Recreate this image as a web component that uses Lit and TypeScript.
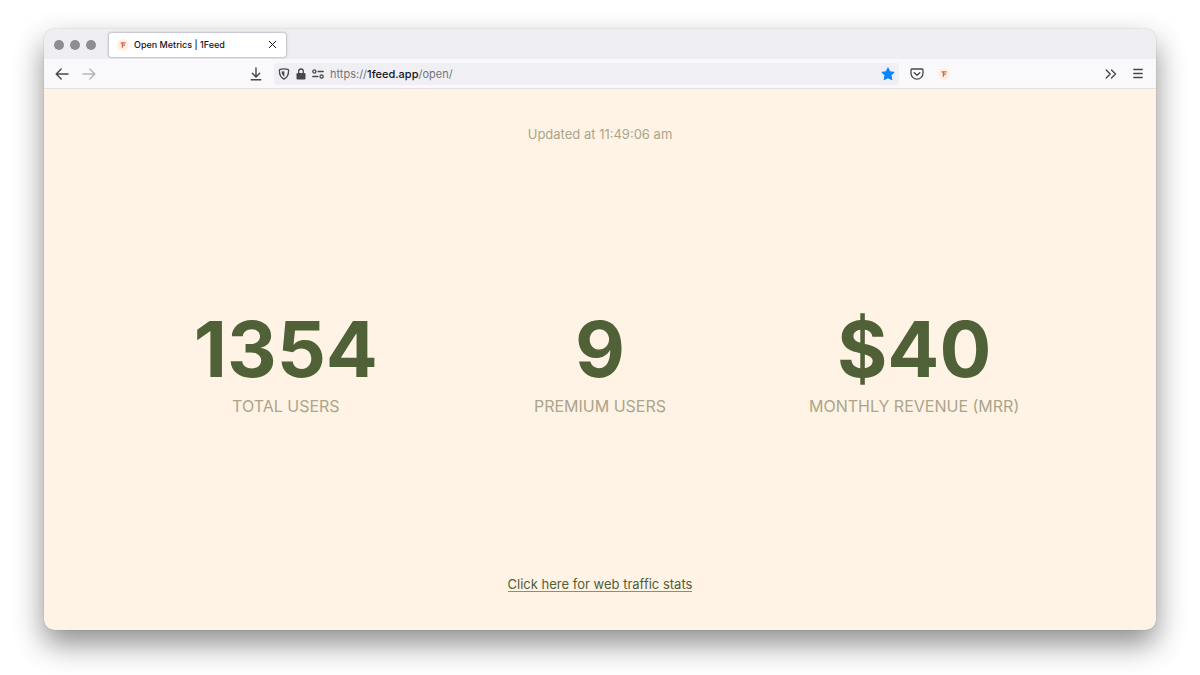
import { LitElement, html, css, svg } from "lit";
import { customElement, property, state } from "lit/decorators.js";

const stroke = (d: string, width = 1.4) =>
  svg`<path d=${d} fill="none" stroke="currentColor" stroke-width=${width} stroke-linecap="round" stroke-linejoin="round"></path>`;

const icons = {
  close: html`<svg width="9" height="9" viewBox="0 0 9 9" aria-hidden="true">${stroke("M1.2 1.2l6.6 6.6M7.8 1.2L1.2 7.8", 1)}</svg>`,
  back: html`<svg width="14" height="14" viewBox="0 0 14 14" aria-hidden="true">${stroke("M13 7H1.4M6.2 2L1.2 7l5 5")}</svg>`,
  forward: html`<svg width="14" height="14" viewBox="0 0 14 14" aria-hidden="true">${stroke("M1 7h11.6M7.8 2l5 5-5 5")}</svg>`,
  download: html`<svg width="12" height="14" viewBox="0 0 12 14" aria-hidden="true">${stroke("M6 1v8.600M2.300 6.200L6 9.900l3.700-3.700M1.200 12.700h9.600")}</svg>`,
  shield: html`<svg width="12" height="12" viewBox="0 0 12 12" aria-hidden="true">
    ${stroke("M2.200 1.400Q6 .500 9.800 1.400Q10.600 1.600 10.600 2.500C10.600 7 9.300 9.600 6 11.200C2.700 9.600 1.400 7 1.400 2.500Q1.400 1.600 2.200 1.400Z", 1.3)}
    <path d="M6.300 3.200v5.600C4.500 7.600 3.800 6.100 3.700 3.600Z" fill="currentColor"></path>
  </svg>`,
  lock: html`<svg width="10" height="12" viewBox="0 0 10 12" aria-hidden="true">
    ${stroke("M2.700 6V3.300a2.300 2.300 0 0 1 4.600 0V6", 1.3)}
    <rect x="0.500" y="5" width="9" height="6.500" rx="1.200" fill="currentColor"></rect>
  </svg>`,
  permissions: html`<svg width="12" height="10" viewBox="0 0 12 10" aria-hidden="true">
    <circle cx="2.400" cy="2.500" r="1.600" fill="none" stroke="currentColor" stroke-width="1.300"></circle>
    <circle cx="9.600" cy="7.500" r="1.600" fill="none" stroke="currentColor" stroke-width="1.300"></circle>
    ${stroke("M6.200 2.500h5M.8 7.500h5", 1.4)}
  </svg>`,
  star: html`<svg width="14" height="14" viewBox="0 0 14 14" aria-hidden="true">
    <path d="M7 .8l1.900 4 4.300.5-3.200 3 .9 4.500L7 10.700l-3.900 2.100.9-4.500-3.200-3 4.300-.5Z" fill="currentColor" stroke="currentColor" stroke-width="1" stroke-linejoin="round"></path>
  </svg>`,
  pocket: html`<svg width="14" height="12" viewBox="0 0 14 12" aria-hidden="true">
    ${stroke("M1.900 1h10.200c.5 0 .9.400.9.900V5.200a6 5.900 0 0 1-12 0V1.900c0-.5.400-.9.900-.9Z", 1.3)}
    ${stroke("M4.200 4.700L7 7.300l2.800-2.600", 1.4)}
  </svg>`,
  overflow: html`<svg width="12" height="10" viewBox="0 0 12 10" aria-hidden="true">${stroke("M1.200 1L5.200 5l-4 4M6.500 1l4 4-4 4", 1.4)}</svg>`,
  menu: html`<svg width="10" height="11" viewBox="0 0 10 11" aria-hidden="true">${stroke("M.8 1.500h8.400M.8 5.500h8.400M.8 9.500h8.400", 1.4)}</svg>`,
  feed: html`<svg width="12" height="12" viewBox="0 0 12 12" aria-hidden="true">
    <circle cx="6" cy="6" r="6" fill="#fff0e2"></circle>
    <path d="M3.600 3.800h5M5.400 3.800v4.900M5.400 6.100h2.600" fill="none" stroke="#d6605a" stroke-width="1.300"></path>
  </svg>`,
};

@customElement("metric-stat")
export class MetricStat extends LitElement {
  @property() value = "";
  @property() label = "";

  static styles = css`
    :host {
      display: flex;
      flex-direction: column-reverse;
      align-items: center;
      gap: 7px;
      text-align: center;
    }
    .value {
      margin: 0;
      font-size: 77px;
      line-height: 80px;
      font-weight: 700;
      color: #506037;
    }
    .label {
      margin: 0;
      font-size: 16px;
      line-height: 20px;
      font-weight: 400;
      text-transform: uppercase;
      white-space: nowrap;
      color: #aba58b;
    }
  `;

  render() {
    return html`
      <h2 class="label">${this.label}</h2>
      <p class="value">${this.value}</p>
    `;
  }
}

@customElement("app-root")
export class AppRoot extends LitElement {
  @state() private editing = false;

  private readonly metrics = [
    { value: "1354", label: "Total users" },
    { value: "9", label: "Premium users" },
    { value: "$40", label: "Monthly revenue (MRR)" },
  ];

  static styles = css`
    :host {
      display: flex;
      box-sizing: border-box;
      min-height: 100vh;
      padding: 29px 44px 45px;
      overflow: hidden;
      background: #ffffff;
      font-family: Inter, "Liberation Sans", sans-serif;
    }
    button {
      display: grid;
      place-items: center;
      padding: 0;
      border: 0;
      background: none;
      color: inherit;
    }
    svg {
      display: block;
    }
    .window {
      flex: 1;
      display: flex;
      flex-direction: column;
      min-width: 0;
      border-radius: 10px;
      background: #fff3e5;
      box-shadow: 0 0 1px rgba(0, 0, 0, 0.4), 0 14px 30px rgba(0, 0, 0, 0.45);
    }
    .tabs {
      display: flex;
      align-items: center;
      gap: 13px;
      height: 30px;
      padding: 1px 10px 0;
      box-sizing: border-box;
      border-radius: 10px 10px 0 0;
      background: #efeef3;
    }
    .lights {
      display: flex;
      gap: 6px;
    }
    .light {
      width: 10px;
      height: 10px;
      border-radius: 50%;
      background: #8e8e90;
    }
    .tab {
      display: flex;
      align-items: center;
      gap: 5px;
      box-sizing: border-box;
      width: 177px;
      height: 24px;
      padding: 0 9px 0 8px;
      border-radius: 3px;
      background: #ffffff;
      box-shadow: 0 0 2px 1px rgba(100, 100, 120, 0.35);
      font-size: 9px;
      line-height: 12px;
      font-weight: 500;
      color: #15141a;
    }
    .title {
      flex: 1;
      white-space: nowrap;
    }
    .toolbar {
      display: flex;
      align-items: center;
      height: 29px;
      padding: 0 13px 0 11px;
      border-bottom: 1px solid #e4e0df;
      background: #f9f9fb;
      color: #47464d;
    }
    .history {
      display: flex;
      gap: 13px;
      width: 195px;
    }
    .history button:disabled {
      color: #b5b5b9;
    }
    .address {
      flex: 1;
      display: flex;
      align-items: center;
      gap: 6px;
      min-width: 0;
      height: 22px;
      margin: 0 11px 0 12px;
      padding: 0 4px;
      border-radius: 3px;
      background: #f0f0f4;
    }
    .field {
      flex: 1;
      display: grid;
      align-items: center;
      min-width: 0;
      font-size: 11px;
      line-height: 16px;
    }
    .field > * {
      grid-area: 1 / 1;
    }
    .url {
      color: #75747a;
      white-space: nowrap;
    }
    .host {
      color: #15141a;
      font-weight: 500;
    }
    .input {
      width: 100%;
      box-sizing: border-box;
      padding: 0;
      border: 0;
      outline: 0;
      background: none;
      color: #15141a;
      font: inherit;
    }
    .star {
      color: #0a84ff;
    }
    .extensions {
      display: flex;
      align-items: center;
      gap: 14px;
      flex: none;
      width: 195px;
    }
    .tools {
      display: flex;
      align-items: center;
      gap: 16px;
    }
    .page {
      flex: 1;
      display: flex;
      flex-direction: column;
      align-items: center;
      padding: 35px 60px 38px;
      line-height: 20px;
    }
    .updated {
      margin: 0;
      font-size: 13px;
      color: #aba58b;
    }
    .stats {
      flex: 1;
      display: grid;
      grid-template-columns: repeat(3, 1fr);
      align-items: center;
      width: 95%;
      padding-top: 3px;
    }
    .traffic {
      font-size: 13px;
      line-height: 14px;
      color: #506037;
      text-decoration: none;
      border-bottom: 1px solid #8c9073;
    }
  `;

  private edit(event: Event) {
    this.editing = true;
    (event.target as HTMLInputElement).value = "https://1feed.app/open/";
  }

  private leave(event: Event) {
    this.editing = false;
    (event.target as HTMLInputElement).value = "";
  }

  render() {
    return html`
      <div class="window">
        <header class="tabs">
          <div class="lights">
            <span class="light"></span><span class="light"></span><span class="light"></span>
          </div>
          <div class="tab">
            ${icons.feed}
            <span class="title">Open Metrics | 1Feed</span>
            <button aria-label="Close tab">${icons.close}</button>
          </div>
        </header>
        <nav class="toolbar">
          <div class="history">
            <button aria-label="Back">${icons.back}</button>
            <button aria-label="Forward" disabled>${icons.forward}</button>
          </div>
          <button aria-label="Downloads">${icons.download}</button>
          <div class="address">
            <button aria-label="Tracking protection">${icons.shield}</button>
            <button aria-label="Connection security">${icons.lock}</button>
            <button aria-label="Permissions">${icons.permissions}</button>
            <div class="field">
              <label class="url" for="url" ?hidden=${this.editing}>https://<span class="host">1feed.app</span>/open/</label>
              <input class="input" id="url" type="text" @focus=${this.edit} @blur=${this.leave} />
            </div>
            <button class="star" aria-label="Bookmark">${icons.star}</button>
          </div>
          <div class="extensions">
            <button aria-label="Save to Pocket">${icons.pocket}</button>
            <button aria-label="1Feed">${icons.feed}</button>
          </div>
          <div class="tools">
            <button aria-label="More tools">${icons.overflow}</button>
            <button aria-label="Menu">${icons.menu}</button>
          </div>
        </nav>
        <main class="page">
          <p class="updated">Updated at 11:49:06 am</p>
          <div class="stats">
            ${this.metrics.map((m) => html`<metric-stat .value=${m.value} .label=${m.label}></metric-stat>`)}
          </div>
          <a class="traffic" href="#traffic">Click here for web traffic stats</a>
        </main>
      </div>
    `;
  }
}
